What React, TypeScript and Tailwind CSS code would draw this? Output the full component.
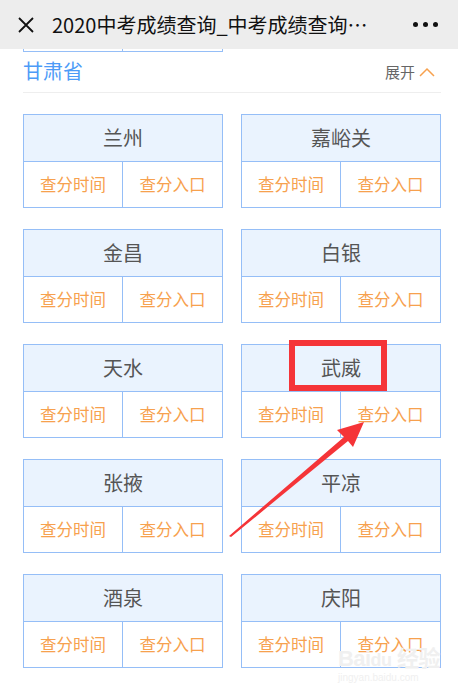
import React from "react";

const FONT = { fontFamily: '"Noto Sans CJK SC", "Liberation Sans", sans-serif' };

const rows: [string, string][] = [
  ["兰州", "嘉峪关"],
  ["金昌", "白银"],
  ["天水", "武威"],
  ["张掖", "平凉"],
  ["酒泉", "庆阳"],
];

function Card({ name, highlight }: { name: string; highlight?: boolean }) {
  return (
    <div className="relative h-[94px] border border-[#95bef7] flex flex-col">
      <div className="h-[47px] bg-[#eaf3fe] border-b border-[#95bef7] flex items-center justify-center text-[20px] text-[#555]">
        {name}
      </div>
      <div className="flex-1 flex text-[16.5px] text-[#f7a14e]">
        <div className="w-1/2 border-r border-[#95bef7] flex items-center justify-center">查分时间</div>
        <div className="w-1/2 flex items-center justify-center">查分入口</div>
      </div>
      {highlight && (
        <div className="absolute left-[47px] top-[-5px] w-[98px] h-[51px] border-[6px] border-[#f53438]" />
      )}
    </div>
  );
}

export default function App() {
  return (
    <div className="relative w-[458px] h-[687px] overflow-hidden bg-white" style={FONT}>
      {/* top bar */}
      <div className="h-[49px] bg-[#ededed] flex items-center">
        <svg width="18" height="18" viewBox="0 0 18 18" className="ml-[17px] shrink-0">
          <path d="M2 2 L16 16 M16 2 L2 16" stroke="#111" strokeWidth="1.8" fill="none" />
        </svg>
        <div className="ml-[17px] w-[338px] text-[20px] text-[#111] whitespace-nowrap overflow-hidden">
          2020中考成绩查询_中考成绩查询…
        </div>
        <div className="ml-auto mr-[20px] flex gap-[5px]">
          <span className="w-[5px] h-[5px] rounded-full bg-[#111]" />
          <span className="w-[5px] h-[5px] rounded-full bg-[#111]" />
          <span className="w-[5px] h-[5px] rounded-full bg-[#111]" />
        </div>
      </div>

      <div className="ml-[23px] w-[418px]">
        {/* partial card bottom */}
        <div className="w-[200px] h-[3px] border-x border-b border-[#95bef7] flex">
          <div className="w-1/2 border-r border-[#95bef7]" />
        </div>

        {/* section header */}
        <div className="h-[41px] flex items-center justify-between border-b border-[#eeeeee]">
          <span className="text-[20px] text-[#4d9bf7] leading-none mt-[-2px]">甘肃省</span>
          <span className="flex items-center text-[15px] text-[#666] mr-[6px]">
            展开
            <svg width="16" height="10" viewBox="0 0 16 10" className="ml-[4px]">
              <path d="M1 9 L8 2 L15 9" stroke="#f7a14e" strokeWidth="1.5" fill="none" />
            </svg>
          </span>
        </div>

        {/* grid */}
        <div className="mt-[21px] grid grid-cols-2 gap-x-[18px] gap-y-[21px]">
          {rows.map(([a, b]) => (
            <React.Fragment key={a}>
              <Card name={a} />
              <Card name={b} highlight={b === "武威"} />
            </React.Fragment>
          ))}
        </div>
      </div>

      {/* arrow */}
      <svg className="absolute left-0 top-0 pointer-events-none" width="458" height="687">
        <polygon
          points="229,536 344,437 337,430 364,422 353,447 348,441 231,537"
          fill="#f53438"
        />
      </svg>

      {/* watermark */}
      <div className="absolute left-[338px] top-[648px] pointer-events-none leading-none">
        <div className="text-[22px] font-bold text-[#f0f0f0] tracking-tight" style={{ fontFamily: '"Liberation Sans", "Noto Sans CJK SC", sans-serif' }}>
          Bai<span className="text-[18px]">du</span> 经验
        </div>
        <div className="text-[10px] text-[#f0f0f0] mt-[3px]" style={{ fontFamily: '"Liberation Sans", sans-serif' }}>
          jingyan.baidu.com
        </div>
      </div>
    </div>
  );
}
